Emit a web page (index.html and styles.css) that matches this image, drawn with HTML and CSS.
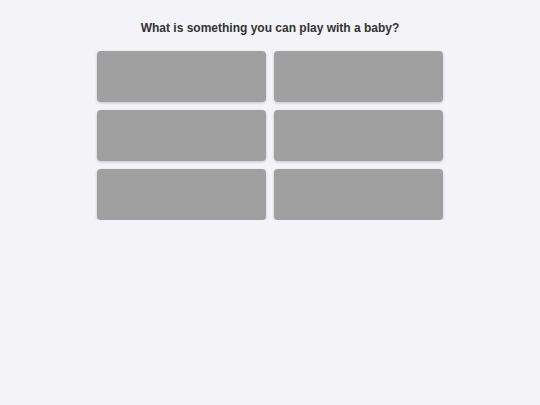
FILE: index.html
```html
<!DOCTYPE html>
<html>

<head>
    <title>Question</title>
    <link rel="stylesheet" href="styles.css">
</head>

<body>
    <div id="board">
        <h1 id="question">What is something you can play with a baby?</h1>
        <div id="answers">
            <div class="answer"></div>
            <div class="answer"></div>
            <div class="answer"></div>
            <div class="answer"></div>
            <div class="answer"></div>
            <div class="answer"></div>
        </div>
    </div>
</body>

</html>
```

FILE: styles.css
```css
body {
    margin: 0;
    background-color: #f3f3f8;
    font-family: "Liberation Sans", Arial, sans-serif;
}

#board {
    width: 346px;
    margin: 0 auto;
    padding-top: 21px;
}

#question {
    margin: 0 0 16px 0;
    font-size: 12px;
    line-height: 14px;
    text-align: center;
    color: #333333;
}

#answers {
    display: grid;
    grid-template-columns: 1fr 1fr;
    gap: 8px;
}

.answer {
    height: 51px;
    border-radius: 4px;
    background-color: #a0a0a0;
    box-shadow: 0 1px 3px rgba(0, 0, 0, 0.2);
}
```
